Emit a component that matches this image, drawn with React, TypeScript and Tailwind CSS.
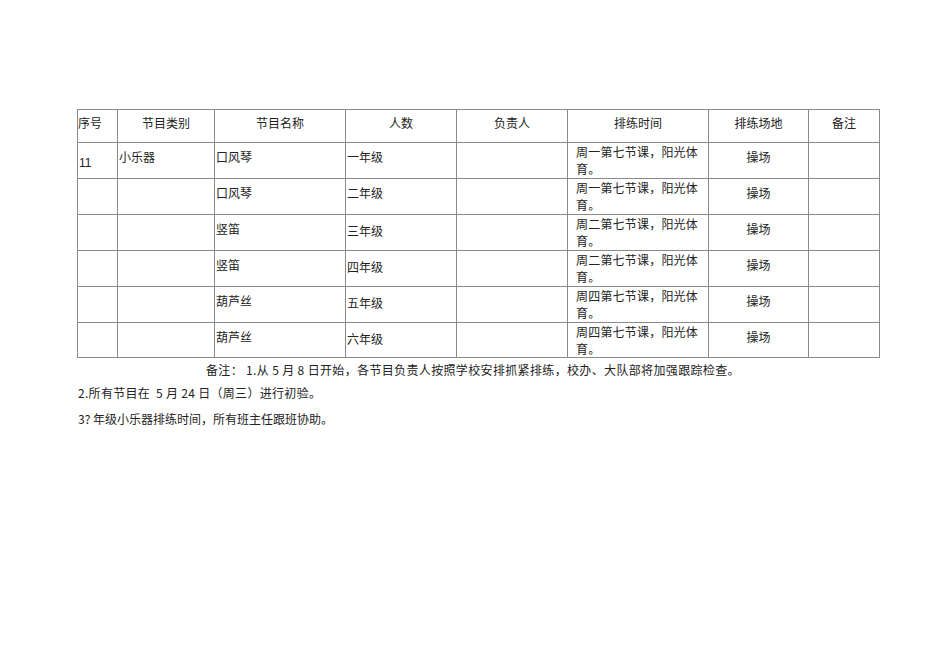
const rows = [
  { no: "11", cat: "小乐器", name: "口风琴", grade: "一年级", day: "周一" },
  { no: "", cat: "", name: "口风琴", grade: "二年级", day: "周一" },
  { no: "", cat: "", name: "竖笛", grade: "三年级", day: "周二" },
  { no: "", cat: "", name: "竖笛", grade: "四年级", day: "周二" },
  { no: "", cat: "", name: "葫芦丝", grade: "五年级", day: "周四" },
  { no: "", cat: "", name: "葫芦丝", grade: "六年级", day: "周四" },
];

const heights = ["h-[36px]", "h-[36px]", "h-[36px]", "h-[36px]", "h-[36px]", "h-[35px]"];

const font = { fontFamily: '"Noto Sans CJK SC", "Liberation Sans", sans-serif' };

export default function App() {
  return (
    <div className="w-[950px] h-[672px] bg-white text-[#222] text-[12px]" style={font}>
      <div className="pt-[109px] pl-[77px]">
        <table className="table-fixed border-collapse w-[802px]">
          <colgroup>
            <col className="w-[40px]" />
            <col className="w-[97px]" />
            <col className="w-[131px]" />
            <col className="w-[111px]" />
            <col className="w-[111px]" />
            <col className="w-[141px]" />
            <col className="w-[100px]" />
            <col className="w-[71px]" />
          </colgroup>
          <thead>
            <tr className="h-[33px] align-top leading-[16px]">
              <th className="border border-[#8a8a8a] font-normal text-left pt-[5px] px-0">序号</th>
              <th className="border border-[#8a8a8a] font-normal pt-[5px]">节目类别</th>
              <th className="border border-[#8a8a8a] font-normal pt-[5px]">节目名称</th>
              <th className="border border-[#8a8a8a] font-normal pt-[5px]">人数</th>
              <th className="border border-[#8a8a8a] font-normal pt-[5px]">负责人</th>
              <th className="border border-[#8a8a8a] font-normal pt-[5px]">排练时间</th>
              <th className="border border-[#8a8a8a] font-normal pt-[5px]">排练场地</th>
              <th className="border border-[#8a8a8a] font-normal pt-[5px]">备注</th>
            </tr>
          </thead>
          <tbody>
            {rows.map((r, i) => (
              <tr key={i} className={`${heights[i]} align-top leading-[17px]`}>
                <td className="border border-[#8a8a8a] pt-[12px] pl-px" style={{ fontFamily: '"Liberation Sans", sans-serif' }}>{r.no}</td>
                <td className="border border-[#8a8a8a] pt-[5px] pl-px">{r.cat}</td>
                <td className="border border-[#8a8a8a] pt-[5px] pl-px">{r.name}</td>
                <td className={`border border-[#8a8a8a] pl-px ${i < 2 ? "pt-[5px]" : "pt-[7px]"}`}>{r.grade}</td>
                <td className="border border-[#8a8a8a]"></td>
                <td className="border border-[#8a8a8a] pt-0 pl-[8px] tracking-[0.2px]">
                  {r.day}第七节课，阳光体
                  <br />
                  育。
                </td>
                <td className="border border-[#8a8a8a] pt-[5px] text-center">操场</td>
                <td className="border border-[#8a8a8a]"></td>
              </tr>
            ))}
          </tbody>
        </table>
        <div className="leading-[16px]">
          <p className="pl-[129px] pt-[4px] tracking-[0.35px]">备注： 1.从 5 月 8 日开始，各节目负责人按照学校安排抓紧排练，校办、大队部将加强跟踪检查。</p>
          <p className="pl-px pt-[7px] tracking-[0.3px]">2.所有节目在&nbsp; 5 月 24 日（周三）进行初验。</p>
          <p className="pl-px pt-[10px]">3? 年级小乐器排练时间，所有班主任跟班协助。</p>
        </div>
      </div>
    </div>
  );
}
